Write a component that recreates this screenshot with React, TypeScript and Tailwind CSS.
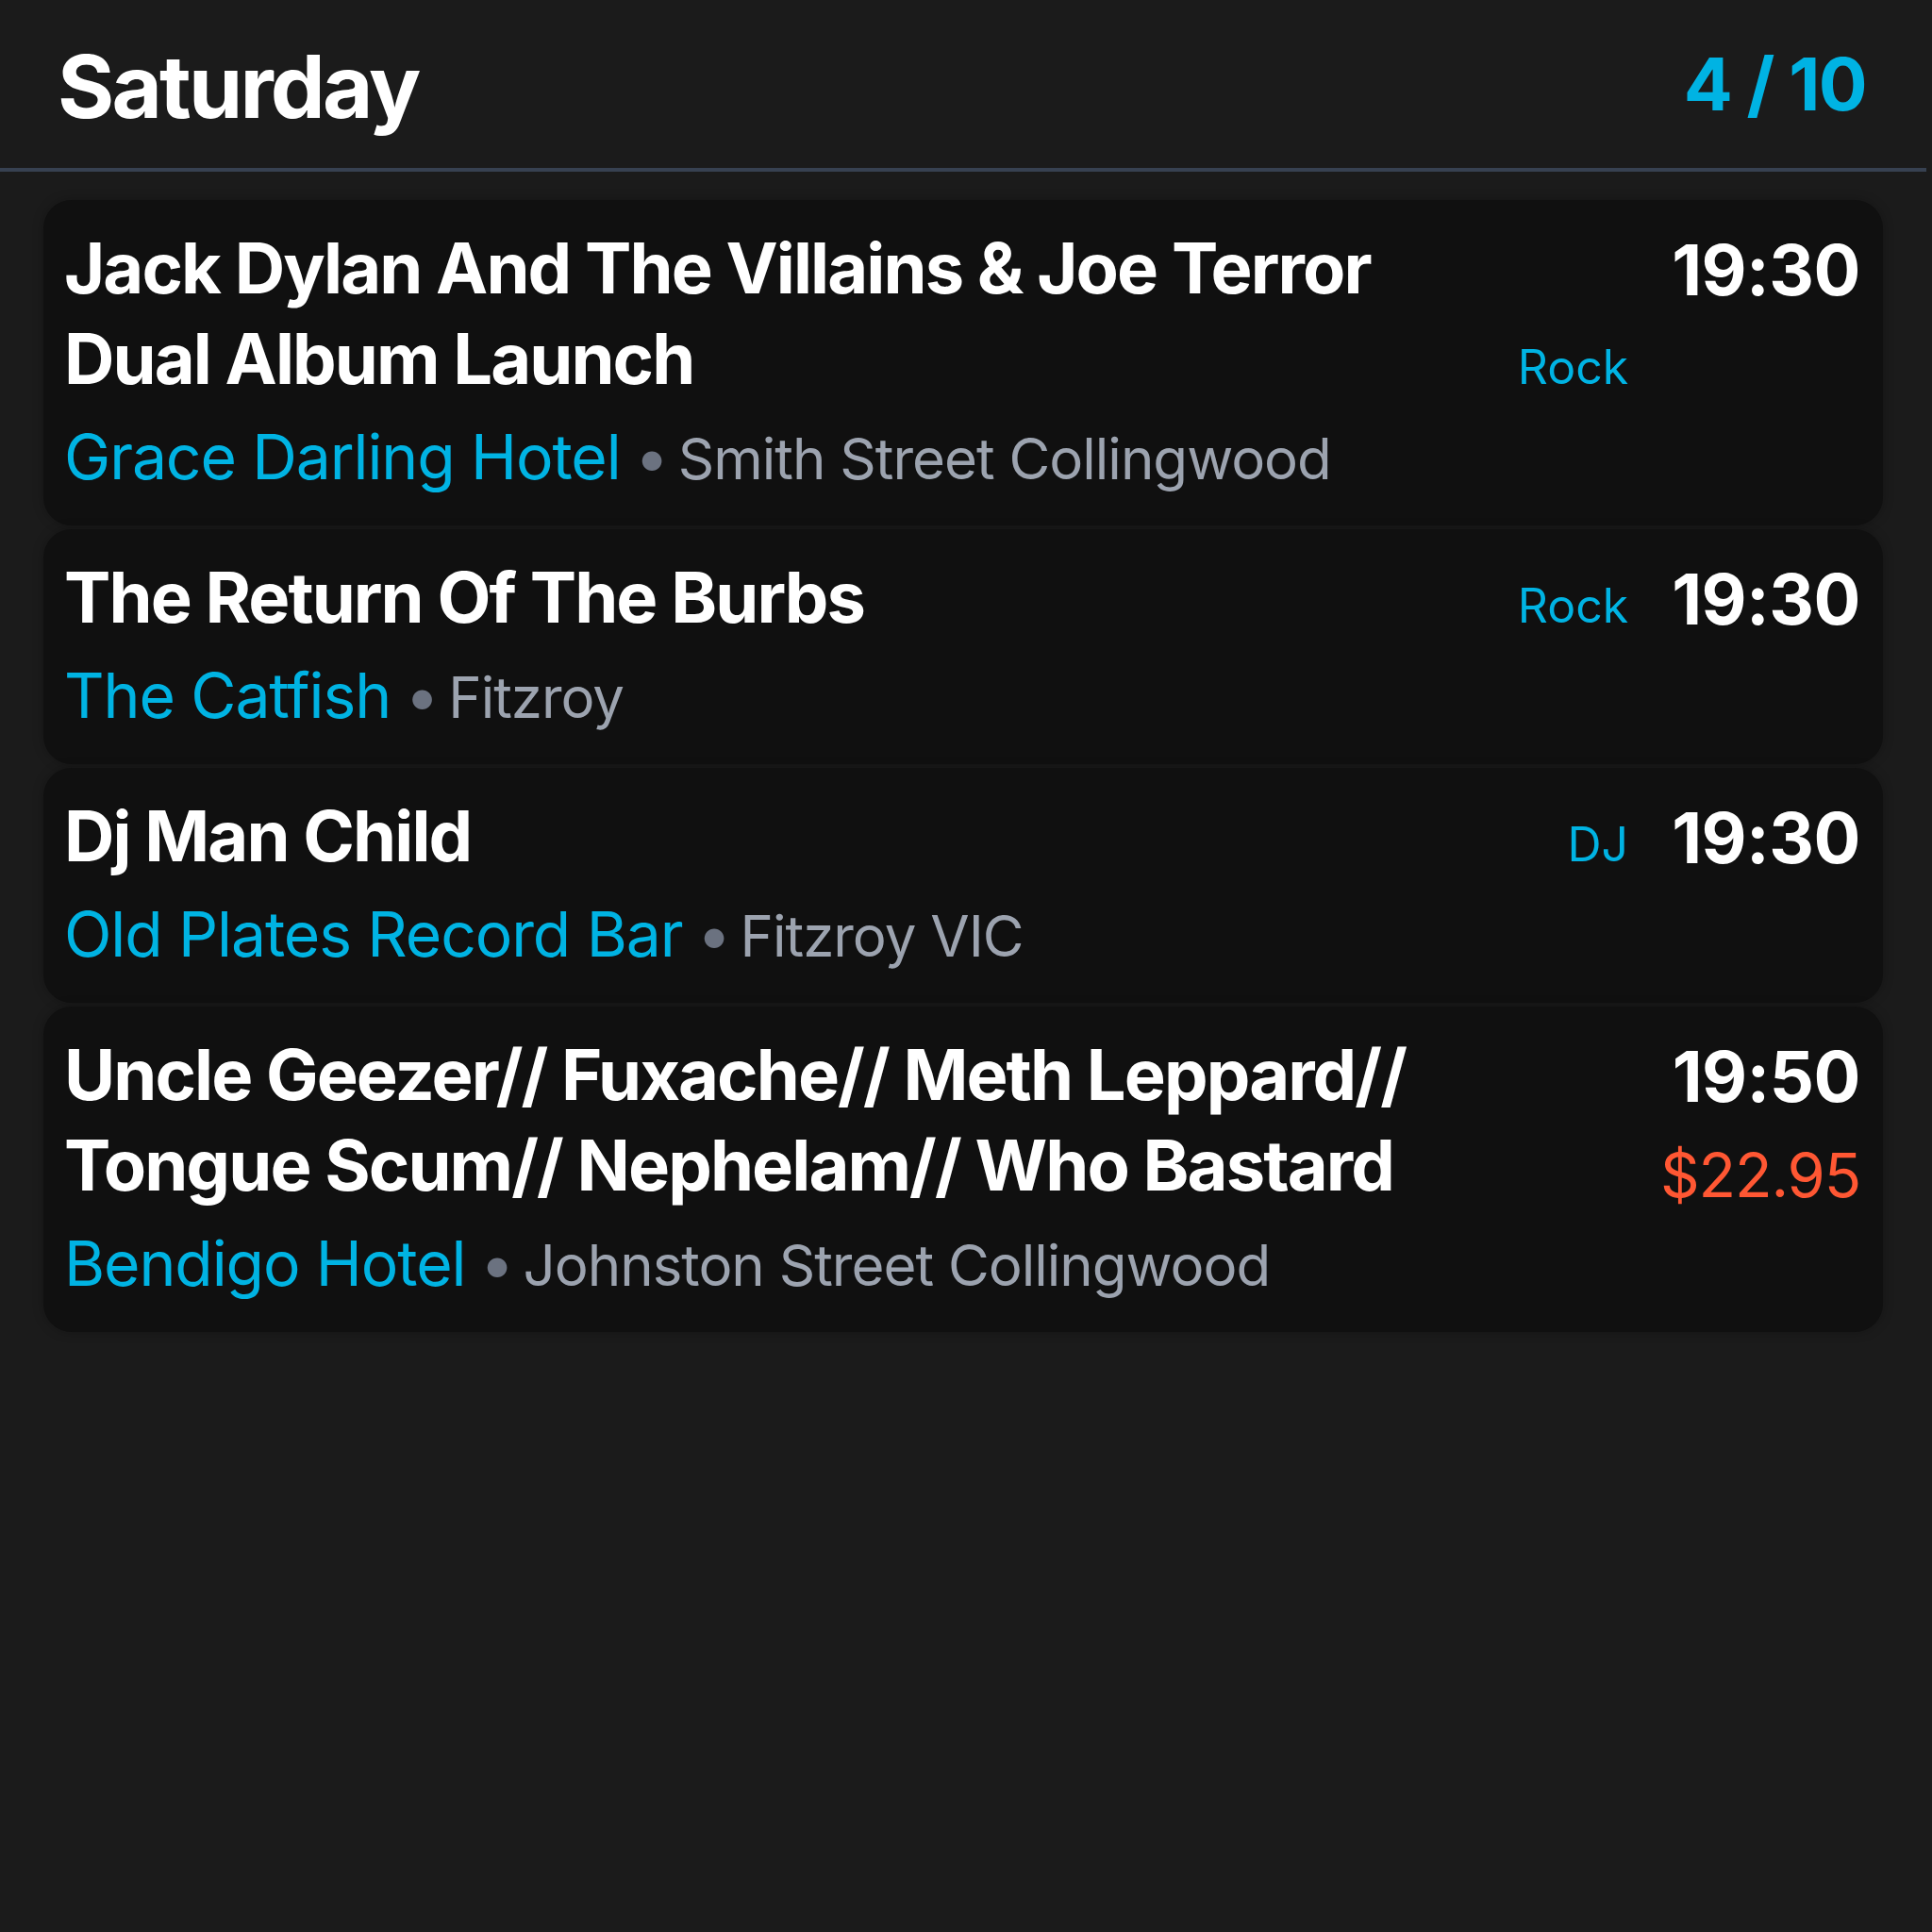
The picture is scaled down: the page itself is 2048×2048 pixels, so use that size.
import React from 'react';

type Gig = {
  title: string;
  venue: string;
  suburb: string;
  genre?: string;
  time: string;
  price?: string;
};

const gigs: Gig[] = [
  {
    title: 'Jack Dylan And The Villains & Joe Terror Dual Album Launch',
    venue: 'Grace Darling Hotel',
    suburb: 'Smith Street Collingwood',
    genre: 'Rock',
    time: '19:30',
  },
  {
    title: 'The Return Of The Burbs',
    venue: 'The Catfish',
    suburb: 'Fitzroy',
    genre: 'Rock',
    time: '19:30',
  },
  {
    title: 'Dj Man Child',
    venue: 'Old Plates Record Bar',
    suburb: 'Fitzroy VIC',
    genre: 'DJ',
    time: '19:30',
  },
  {
    title: 'Uncle Geezer// Fuxache// Meth Leppard// Tongue Scum// Nephelam// Who Bastard',
    venue: 'Bendigo Hotel',
    suburb: 'Johnston Street Collingwood',
    time: '19:50',
    price: '$22.95',
  },
];

const GigCard = ({ gig }: { gig: Gig }) => {
  return (
    <div className="flex rounded-[30px] bg-[#101010] pl-[22px] pr-[24px] pt-[24px] pb-[33px] shadow-[0_0_12px_rgba(0,0,0,0.25)]">
      <div className="flex-1 min-w-0">
        <div className="flex items-end gap-[46px]">
          <h3 className="flex-1 min-w-0 text-[74px] leading-[96px] font-bold text-white tracking-[-1.9px]">
            {gig.title}
          </h3>
          {gig.genre && (
            <span className="text-[50px] leading-[78px] text-[#00b3e3]">{gig.genre}</span>
          )}
        </div>
        <div className="mt-[16px] text-[66px] leading-[80px] whitespace-nowrap">
          <span className="text-[#00b3e3] tracking-[-1.1px]">{gig.venue}</span>
          <span className="ml-[15px] mr-[9px] text-[#6b7280]">•</span>
          <span className="text-[60px] leading-[40px] text-[#9ca3af] tracking-[-1px]">{gig.suburb}</span>
        </div>
      </div>
      <div className="ml-[46px] flex flex-col items-end">
        <div className="mt-[3px] text-[74px] leading-[94px] font-bold text-white tracking-[-0.5px]">
          {gig.time}
        </div>
        {gig.price && (
          <div className="mt-[18px] text-[65px] leading-[80px] text-[#ff5733] tracking-[-1.2px]">
            {gig.price}
          </div>
        )}
      </div>
    </div>
  );
};

const App = () => {
  return (
    <div className="min-h-screen w-[2048px] bg-[#1b1b1b] font-['Inter',sans-serif]">
      <div className="w-[2042px]">
        <header className="flex justify-between border-b-4 border-[#374151] pl-[61px] pr-[64px] pt-[46px] pb-[40px]">
          <h1 className="text-[92px] leading-[92px] font-bold text-white tracking-[-2.8px]">Saturday</h1>
          <div className="text-[77px] leading-[86px] font-bold text-[#00b3e3] tracking-[-1.7px]">4 / 10</div>
        </header>

        <div className="mx-[46px] mt-[30px] flex flex-col gap-[4px]">
          {gigs.map((gig) => (
            <GigCard key={gig.title} gig={gig} />
          ))}
        </div>
      </div>
    </div>
  );
};

export default App;
